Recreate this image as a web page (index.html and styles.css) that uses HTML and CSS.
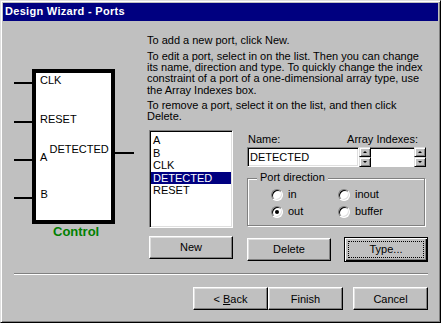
FILE: index.html
```html
<!DOCTYPE html>
<html>
<head>
<meta charset="utf-8">
<title>Design Wizard - Ports</title>
<link rel="stylesheet" href="styles.css">
</head>
<body>
<div class="window">
  <div class="titlebar">Design Wizard - Ports</div>
  <div class="client">
    <div class="main">
      <div class="diagram">
        <div class="block"></div>
        <div class="pin pin-clk"></div>
        <div class="pin pin-reset"></div>
        <div class="pin pin-a"></div>
        <div class="pin pin-b"></div>
        <div class="pin pin-out"></div>
        <span class="plabel l-clk">CLK</span>
        <span class="plabel l-reset">RESET</span>
        <span class="plabel l-a">A</span>
        <span class="plabel l-det">DETECTED</span>
        <span class="plabel l-b">B</span>
        <span class="bname">Control</span>
      </div>
      <div class="panel">
        <div class="help">
          <p>To add a new port, click New.</p>
          <p>To edit a port, select in on the list. Then you can change<br>its name, direction and type. To quickly change the index<br>constraint of a port of a one-dimensional array type, use<br>the Array Indexes box.</p>
          <p>To remove a port, select it on the list, and then click<br>Delete.</p>
        </div>
        <div class="controls">
          <div class="leftcol">
            <div class="listbox">
              <div class="item">A</div>
              <div class="item">B</div>
              <div class="item">CLK</div>
              <div class="item selected">DETECTED</div>
              <div class="item">RESET</div>
            </div>
            <button class="btn btn-new"><span>New</span></button>
          </div>
          <div class="rightcol">
            <div class="labels"><span>Name:</span><span>Array Indexes:</span></div>
            <div class="fields">
              <div class="edit">DETECTED</div>
              <div class="spin"><span><i class="up"></i></span><span><i class="down"></i></span></div>
              <div class="idx"></div>
              <div class="spin"><span><i class="up"></i></span><span><i class="down"></i></span></div>
            </div>
            <div class="group">
              <span class="legend">Port direction</span>
              <div class="radios">
                <div class="opt"><span class="radio"></span><span class="rlabel">in</span></div>
                <div class="opt"><span class="radio"></span><span class="rlabel">inout</span></div>
                <div class="opt"><span class="radio checked"></span><span class="rlabel">out</span></div>
                <div class="opt"><span class="radio"></span><span class="rlabel">buffer</span></div>
              </div>
            </div>
            <div class="btnrow">
              <button class="btn btn-delete"><span>Delete</span></button>
              <button class="btn btn-default"><span class="focus"></span><span>Type...</span></button>
            </div>
          </div>
        </div>
      </div>
    </div>
    <div class="sep"></div>
    <div class="footer">
      <button class="btn btn-wiz"><span>&lt; <u>B</u>ack</span></button>
      <button class="btn btn-wiz"><span>Finish</span></button>
      <button class="btn btn-wiz btn-cancel"><span>Cancel</span></button>
    </div>
  </div>
</div>
</body>
</html>
```
FILE: styles.css
```css
* { box-sizing: border-box; }
html, body { margin: 0; padding: 0; background: #c0c0c0; }
body {
  font-family: "Liberation Sans", Arial, sans-serif;
  font-size: 11px;
  color: #000;
}
.window {
  width: 441px;
  height: 323px;
  background: #c0c0c0;
  border: 1px solid;
  border-color: #dfdfdf #000 #000 #dfdfdf;
  box-shadow: inset 1px 1px 0 #fff, inset -1px -1px 0 #808080;
  padding: 2px;
  display: flex;
  flex-direction: column;
}
.titlebar {
  height: 18px;
  flex: none;
  background: #000080;
  color: #fff;
  font-weight: bold;
  letter-spacing: 0.3px;
  line-height: 17px;
  padding-left: 2px;
  white-space: nowrap;
}
.client { flex: 1; display: flex; flex-direction: column; }
.main { height: 252px; display: flex; flex: none; }

/* diagram canvas */
.diagram { position: relative; width: 144px; flex: none; }
.block {
  position: absolute;
  left: 29px; top: 48px;
  width: 83px; height: 155px;
  border: 4px solid #000;
  background: #fff;
}
.pin { position: absolute; height: 2px; background: #000; width: 18px; left: 11px; }
.pin-clk { top: 61px; }
.pin-reset { top: 100px; }
.pin-a { top: 138px; }
.pin-b { top: 176px; }
.pin-out { left: 112px; top: 131px; width: 19px; }
.plabel { position: absolute; line-height: 13px; white-space: nowrap; }
.l-clk { left: 37px; top: 53px; }
.l-reset { left: 37px; top: 91.5px; }
.l-a { left: 37px; top: 130px; }
.l-det { left: 46.5px; top: 121.5px; }
.l-b { left: 37.5px; top: 167px; }
.bname {
  position: absolute;
  left: 50px; top: 202.5px;
  font-size: 13px;
  font-weight: bold;
  line-height: 15px;
  color: #008000;
}

/* right panel */
.panel { width: 281px; flex: none; padding-top: 14.4px; }
.help { height: 94.6px; white-space: nowrap; }
.help p { margin: 0; line-height: 11.33px; }
.help p + p { margin-top: 4px; }
.controls { display: flex; gap: 14px; padding-left: 2px; }
.leftcol { width: 84px; flex: none; }
.listbox {
  width: 84px;
  height: 98px;
  background: #fff;
  border: 1px solid;
  border-color: #808080 #fff #fff #808080;
  box-shadow: inset 1px 1px 0 #000, inset -1px -1px 0 #dfdfdf;
  padding: 3.5px 1px 0 1px;
}
.item { line-height: 12.5px; padding-left: 2px; white-space: nowrap; }
.item.selected { background: #000080; color: #fff; }

.btn {
  display: flex;
  align-items: center;
  justify-content: center;
  position: relative;
  background: #c0c0c0;
  border: 1px solid;
  border-color: #fff #000 #000 #fff;
  box-shadow: inset -1px -1px 0 #808080, inset 1px 1px 0 #dfdfdf;
  font: inherit;
  color: #000;
  padding: 0;
  margin: 0;
  height: 23px;
  white-space: pre;
}
.btn-new { width: 84px; margin-top: 8px; }

.rightcol { width: 181px; flex: none; }
.labels {
  display: flex;
  justify-content: space-between;
  height: 17px;
  padding: 3px 10px 0 1px;
  line-height: 13px;
}
.fields { display: flex; height: 20px; width: 179px; }
.edit {
  width: 112px;
  flex: none;
  background: #fff;
  border: 1px solid;
  border-color: #808080 #fff #fff #808080;
  box-shadow: inset 1px 1px 0 #000, inset -1px -1px 0 #dfdfdf;
  padding-left: 2px;
  line-height: 18px;
}
.spin { width: 12px; flex: none; display: flex; flex-direction: column; }
.spin span {
  flex: 1;
  display: flex;
  align-items: center;
  justify-content: center;
  background: #c0c0c0;
  border: 1px solid;
  border-color: #dfdfdf #000 #000 #dfdfdf;
  box-shadow: inset 1px 1px 0 #fff, inset -1px -1px 0 #808080;
}
.up, .down { display: block; width: 0; height: 0; border-left: 2px solid transparent; border-right: 2px solid transparent; }
.up { border-bottom: 2px solid #000; }
.down { border-top: 2px solid #000; }
.idx {
  width: 43px;
  flex: none;
  background: #fff;
  border-top: 1px solid #808080;
  border-bottom: 1px solid #fff;
  box-shadow: inset 0 1px 0 #000;
}

.group {
  position: relative;
  margin-top: 11px;
  width: 178px;
  height: 48px;
  border: 1px solid #808080;
  box-shadow: 1px 1px 0 #fff, inset 1px 1px 0 #fff;
}
.legend {
  position: absolute;
  left: 9px;
  top: -8px;
  padding: 0 3px;
  background: #c0c0c0;
  line-height: 13px;
  white-space: nowrap;
}
.radios {
  display: grid;
  grid-template-columns: 67px auto;
  row-gap: 5px;
  padding: 10px 0 0 23px;
}
.opt { display: flex; align-items: center; height: 12px; }
.radio {
  position: relative;
  width: 12px;
  height: 12px;
  flex: none;
  border-radius: 50%;
  background: #fff;
  border: 1px solid;
  border-color: #808080 #fff #fff #808080;
  box-shadow: inset 1px 1px 0 #000, inset -1px -1px 0 #dfdfdf;
}
.radio.checked::after {
  content: "";
  position: absolute;
  left: 3px; top: 3px;
  width: 4px; height: 4px;
  border-radius: 50%;
  background: #000;
}
.rlabel { margin-left: 5px; line-height: 13px; }

.btnrow { display: flex; justify-content: space-between; align-items: flex-start; margin-top: 11px; }
.btn-delete { width: 84px; margin-top: 1px; }
.btn-default {
  width: 84px;
  height: 25px;
  border: 1px solid #000;
  box-shadow: inset 1px 1px 0 #fff, inset -1px -1px 0 #000, inset -2px -2px 0 #808080;
}
.focus {
  position: absolute;
  left: 3px; top: 3px; right: 3px; bottom: 3px;
  border: 1px dotted #000;
}

.sep {
  height: 2px;
  margin: 0 10px 0 11px;
  border-top: 1px solid #808080;
  border-bottom: 1px solid #fff;
  flex: none;
}
.footer { display: flex; justify-content: flex-end; padding-right: 10px; margin-top: 12px; }
.btn-wiz { width: 75px; }
.btn-cancel { margin-left: 10px; }
.btn u { text-decoration: underline; }
```
